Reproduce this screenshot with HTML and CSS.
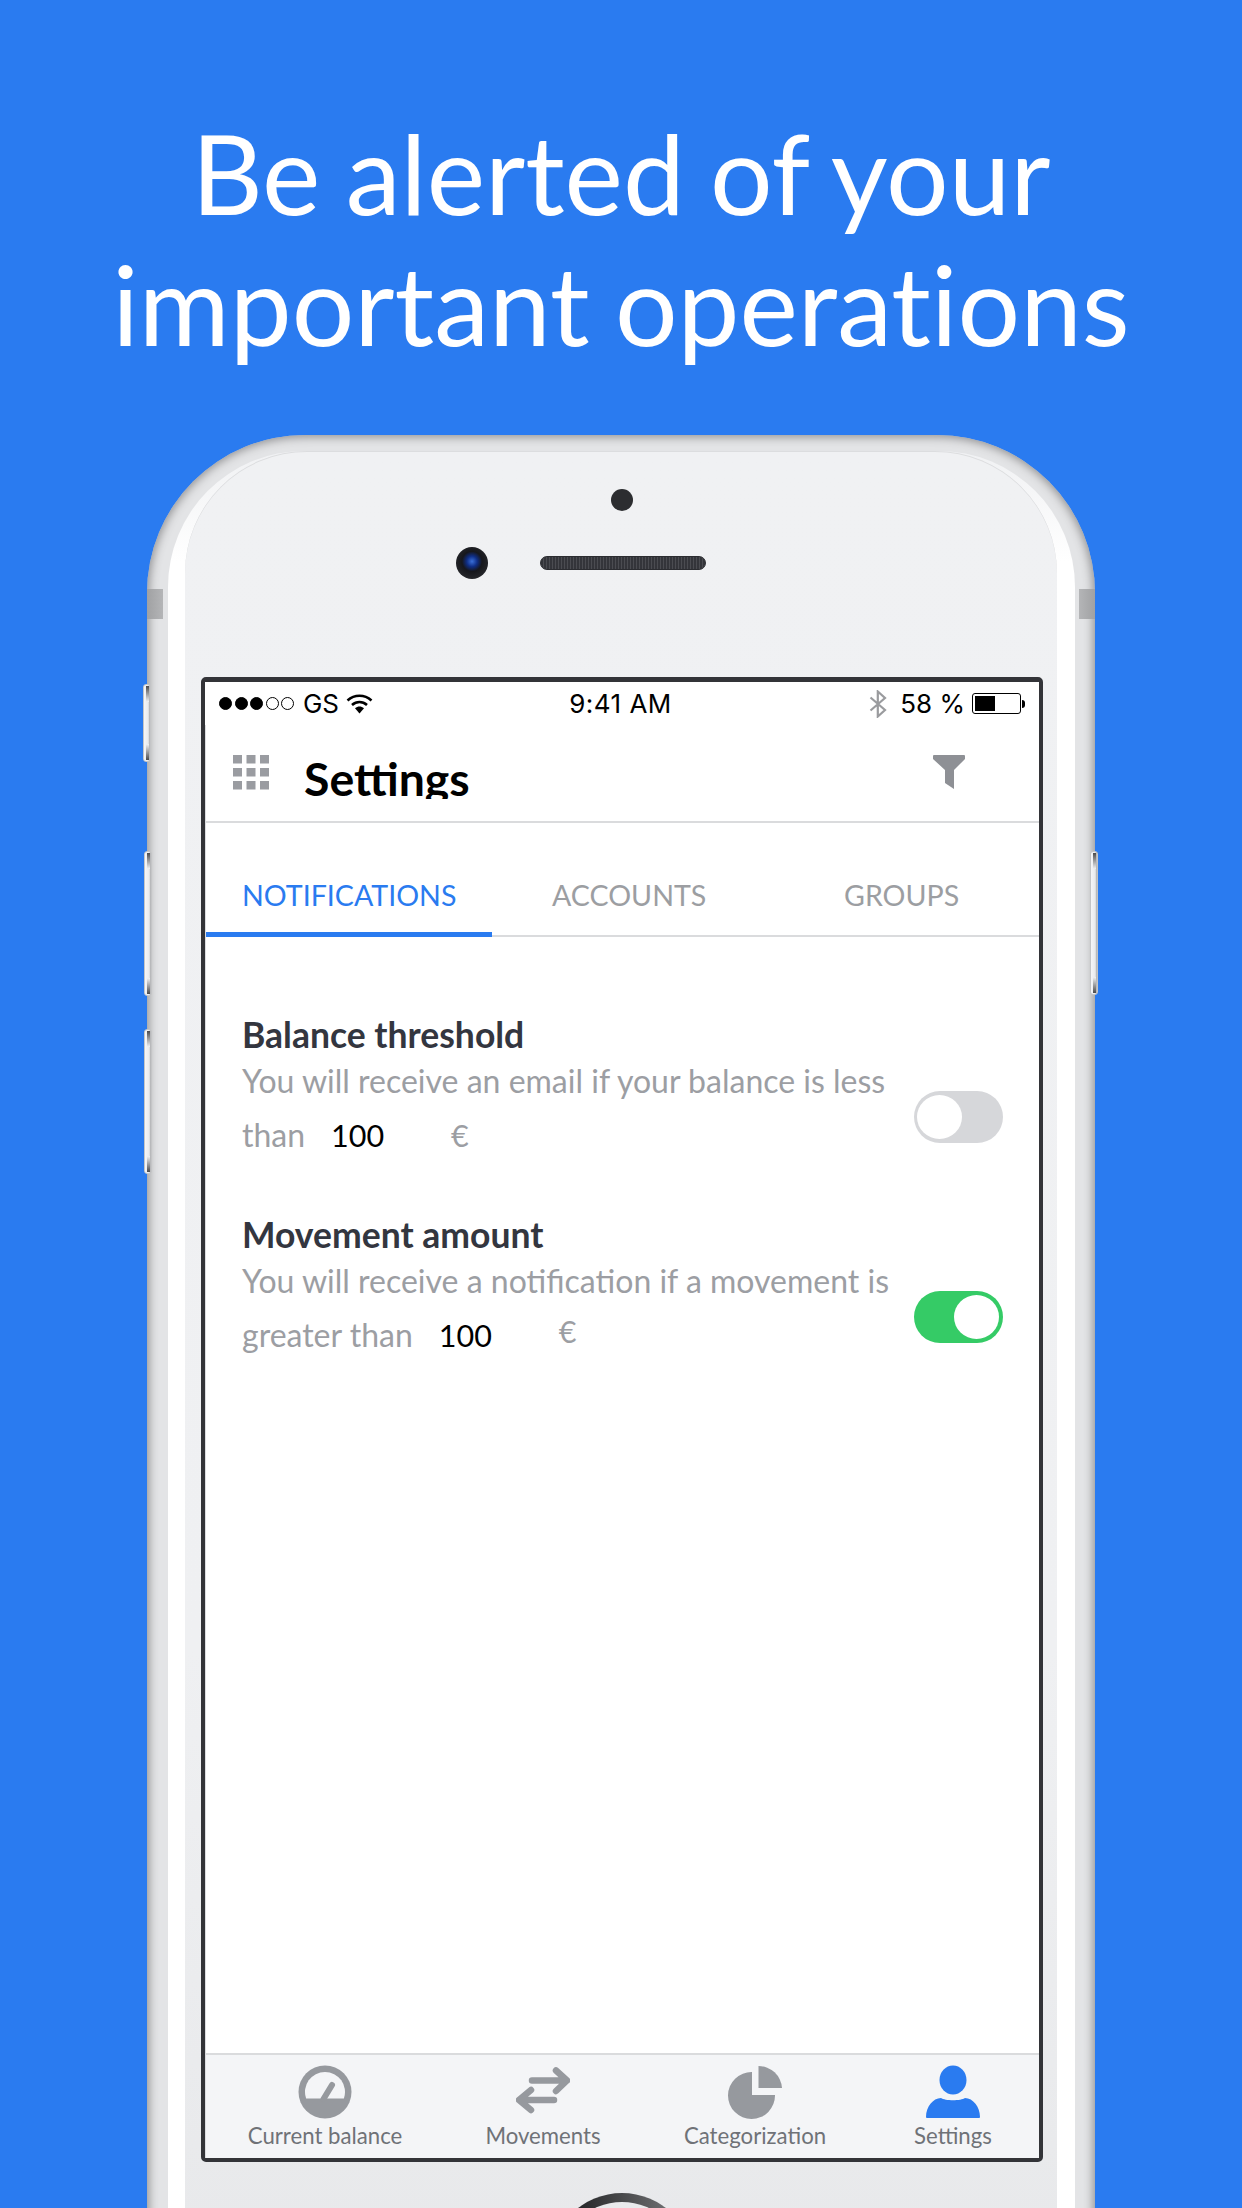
FILE: index.html
```html
<!DOCTYPE html>
<html lang="en">
<head>
<meta charset="utf-8">
<title>Settings</title>
<link rel="stylesheet" href="styles.css">
</head>
<body>
<main class="page">
  <h1 class="headline">Be alerted of your<br>important operations</h1>
  <section class="phone">
    <span class="hw mute"></span>
    <span class="hw vol-up"></span>
    <span class="hw vol-down"></span>
    <span class="hw power"></span>
    <span class="band band-left"></span>
    <span class="band band-right"></span>
    <div class="bezel">
      <div class="face">
        <div class="sensors">
          <span class="sensor-dot"></span>
          <div class="sensor-row">
            <span class="camera"></span>
            <span class="speaker"></span>
          </div>
        </div>
        <div class="screen">
          <div class="status">
            <div class="status-left">
              <span class="sig on"></span><span class="sig on"></span><span class="sig on"></span><span class="sig"></span><span class="sig"></span>
              <span class="carrier">GS</span>
              <svg class="wifi" width="27" height="20" viewBox="0 0 26 20"><path d="M1 6.500C8 .2 18 .2 25 6.500" fill="none" stroke="#000" stroke-width="2.600"/><path d="M5.500 11C10 7 16 7 20.500 11" fill="none" stroke="#000" stroke-width="2.600"/><path d="M8.500 14.200C11.500 11.800 14.500 11.800 17.500 14.200L13 19.500Z" fill="#000"/></svg>
            </div>
            <span class="clock">9:41 AM</span>
            <div class="status-right">
              <svg class="bt" width="18" height="28" viewBox="0 0 18 28"><path d="M1.500 7.500L16 20 8.800 26.500V1.500L16 8 1.500 20.500" fill="none" stroke="#9a9b9e" stroke-width="2.200"/></svg>
              <span class="pct">58 %</span>
              <span class="battery"><span class="battery-fill"></span></span>
              <span class="battery-nub"></span>
            </div>
          </div>
          <div class="app">
            <header class="app-head">
              <svg class="grid-icon" width="36" height="35" viewBox="0 0 36 35" fill="#9a9ca1"><rect x="0" y="0" width="9" height="8.500"/><rect x="13.500" y="0" width="9" height="8.500"/><rect x="27" y="0" width="9" height="8.500"/><rect x="0" y="13" width="9" height="8.500"/><rect x="13.500" y="13" width="9" height="8.500"/><rect x="27" y="13" width="9" height="8.500"/><rect x="0" y="26" width="9" height="8.500"/><rect x="13.500" y="26" width="9" height="8.500"/><rect x="27" y="26" width="9" height="8.500"/></svg>
              <div class="title-clip"><span class="title">Settings</span></div>
              <svg class="filter-icon" width="32" height="35" viewBox="0 0 32 35"><path d="M1 0H31Q32 0 32 1V4L21 15V34L12 28V15L0 4V1Q0 0 1 0Z" fill="#8e9095"/></svg>
            </header>
            <nav class="tabs">
              <div class="tab tab-active">NOTIFICATIONS</div>
              <div class="tab tab-mid">ACCOUNTS</div>
              <div class="tab tab-last">GROUPS</div>
            </nav>
            <div class="settings">
              <article class="row">
                <div class="row-text">
                  <h2 class="row-title">Balance threshold</h2>
                  <p class="row-desc">You will receive an email if your balance is less</p>
                  <p class="row-desc row-input"><span>than</span><span class="amount">100</span><span class="euro">€</span></p>
                </div>
                <span class="toggle"><span class="knob"></span></span>
              </article>
              <article class="row">
                <div class="row-text">
                  <h2 class="row-title">Movement amount</h2>
                  <p class="row-desc">You will receive a notification if a movement is</p>
                  <p class="row-desc row-input"><span>greater than</span><span class="amount">100</span><span class="euro euro-raised">€</span></p>
                </div>
                <span class="toggle toggle-on"><span class="knob"></span></span>
              </article>
            </div>
            <footer class="tabbar">
              <div class="bar-item item-1">
                <svg width="54" height="54" viewBox="0 0 54 54"><circle cx="27" cy="27" r="26.500" fill="#96999e"/><path d="M8.100 33.500A20 20 0 1 1 45.900 33.500Z" fill="#f4f5f7"/><path d="M25.500 34L34 20" stroke="#96999e" stroke-width="6" stroke-linecap="round" fill="none"/></svg>
                <span class="bar-label">Current balance</span>
              </div>
              <div class="bar-item item-2">
                <svg width="54" height="54" viewBox="0 0 54 54" fill="none" stroke="#96999e" stroke-width="6.500" stroke-linecap="round" stroke-linejoin="round"><path d="M16 15.500H51M40 5.500L51 15.500 40 26"/><path d="M38 35H3M15 25L3 35 15 45"/></svg>
                <span class="bar-label">Movements</span>
              </div>
              <div class="bar-item item-3">
                <svg width="54" height="54" viewBox="0 0 54 54" fill="#96999e"><path d="M24 7V30H47A23.500 23.500 0 1 1 24 7Z"/><path d="M30.500 1A23.500 23.500 0 0 1 54 23H30.500Z"/></svg>
                <span class="bar-label">Categorization</span>
              </div>
              <div class="bar-item item-4">
                <svg width="54" height="54" viewBox="0 0 54 54" fill="#2a7bf0"><ellipse cx="27" cy="15" rx="13.500" ry="14.500"/><path d="M0 52C0 42 7 33 15 33 19 36 35 36 39 33 47 33 54 42 54 52 54 53 53 53 52 53H2C1 53 0 53 0 52Z"/></svg>
                <span class="bar-label">Settings</span>
              </div>
            </footer>
          </div>
        </div>
        <div class="chin"><span class="home"><span class="home-inner"></span></span></div>
      </div>
    </div>
  </section>
</main>
</body>
</html>
```
FILE: styles.css
```css
* { box-sizing: border-box; }
html, body { margin: 0; padding: 0; }
body { background: #2a7bf0; font-family: "Lato", "Liberation Sans", sans-serif; }
.page { width: 1242px; height: 2208px; overflow: hidden; background: #2a7bf0; }
.headline { margin: 0; padding-top: 107px; height: 435px; text-align: center; color: #fff; font-weight: 400; font-size: 110.500px; word-spacing: -3px; line-height: 131px; font-variant-ligatures: none; }
.phone { position: relative; width: 948px; height: 1790px; margin-left: 147px; padding: 16px 20px 0 21px; border-radius: 158px 158px 0 0; background: #e3e4e6; box-shadow: inset 0 0 10px 2px #909092; }
.hw { position: absolute; width: 8px; border-radius: 3px; border: 1px solid #c4c5c7;
  background: linear-gradient(#4a4a4c, #f1f2f4) center 1px / 3px 16px no-repeat, linear-gradient(#f1f2f4, #4a4a4c) center calc(100% - 1px) / 3px 16px no-repeat, linear-gradient(90deg, #f6f6f8, #e9eaec 70%, #a5a6a8); }
.mute { left: -4px; top: 249px; height: 78px; }
.vol-up { left: -3px; top: 416px; height: 145px; }
.vol-down { left: -3px; top: 594px; height: 145px; }
.power { right: -3px; top: 416px; height: 144px; }
.band { position: absolute; top: 154px; width: 16px; height: 30px; background: linear-gradient(90deg, #a0a1a3, #b4b5b7); }
.band-left { left: 0; }
.band-right { right: 0; transform: scaleX(-1); }
.bezel { height: 100%; padding: 0 18px 0 17px; border-radius: 136px 136px 0 0; background: linear-gradient(#f0f1f3 0, #ffffff 110px); }
.face { height: 100%; padding: 0 14px 0 16px; border-radius: 122px 122px 0 0; background: linear-gradient(#f0f1f3 0, #eff0f2 1200px, #e8e9eb 100%); box-shadow: inset 0 1px 0 #dcdddf; }
.sensors { height: 226px; padding-top: 38px; display: flex; flex-direction: column; align-items: center; }
.sensor-dot { width: 22px; height: 22px; border-radius: 50%; background: #2c2d30; }
.sensor-row { display: flex; align-items: center; gap: 52px; margin-top: 36px; padding-right: 82px; }
.camera { width: 32px; height: 32px; border-radius: 50%; background: radial-gradient(circle at 50% 45%, #3a6fd8 0, #0f2e86 22%, #16171c 42%, #26272b 75%, #55565a 100%); }
.speaker { width: 166px; height: 14px; border-radius: 7px; background: repeating-linear-gradient(90deg, #34353a 0 2px, #4b4c51 2px 3px); border: 1px solid #2b2c30; }
.screen { display: flex; flex-direction: column; width: 842px; height: 1485px; border: 4px solid #333438; border-top-width: 5px; border-radius: 5px; background: #fff; }
.status { flex: none; height: 43px; display: grid; grid-template-columns: 1fr auto 1fr; align-items: center; padding: 0 14px 0 14px; font-family: "Inter", "Liberation Sans", sans-serif; font-size: 26px; color: #000; }
.status-left { display: flex; align-items: center; }
.sig { width: 13px; height: 13px; margin-right: 2.600px; border-radius: 50%; border: 1px solid #000; }
.sig.on { background: #000; }
.carrier { margin-left: 6px; }
.wifi { margin-left: 7px; }
.clock { text-align: center; letter-spacing: .5px; margin-right: 3px; }
.status-right { display: flex; align-items: center; justify-content: flex-end; }
.pct { margin-left: 13px; margin-right: 7px; }
.battery { display: block; width: 49px; height: 21px; padding: 2px; border: 1px solid #000; border-radius: 3px; }
.battery-fill { display: block; width: 20px; height: 100%; background: #000; }
.battery-nub { width: 3px; height: 8px; margin-left: 1px; background: #000; border-radius: 0 3px 3px 0; }
.app { flex: 1; min-height: 0; display: flex; flex-direction: column; border-left: 1px solid #dcdde0; }
.app-head { flex: none; display: flex; align-items: flex-start; height: 98px; padding: 30px 74px 0 27px; border-bottom: 2px solid #dadbdd; }
.title-clip { flex: 1; height: 44px; margin-left: 35px; overflow: hidden; }
.title { display: block; margin-top: -3px; font-size: 46.400px; font-weight: 700; line-height: 52px; color: #000; font-feature-settings: "liga", "dlig"; }
.tabs { flex: none; display: flex; height: 114px; border-bottom: 2px solid #dadbdd; font-size: 28.600px; line-height: 36px; color: #9c9ea2; }
.tab { padding-top: 54px; }
.tab-active { width: 286px; padding-left: 36px; color: #2a7bf0; border-bottom: 5px solid #2a7bf0; height: 114px; }
.tab-mid { width: 294px; padding-left: 60px; }
.tab-last { padding-left: 58px; }
.settings { flex: 1; padding: 78px 36px 0 36px; display: flex; flex-direction: column; gap: 52px; }
.row { display: flex; align-items: center; justify-content: space-between; }
.row-title { margin: 0; font-size: 35.500px; line-height: 40px; font-weight: 700; color: #33363f; }
.row-desc { margin: 0; font-size: 32px; line-height: 52px; color: #9c9ea3; white-space: nowrap; font-feature-settings: "liga", "dlig"; }
.row-input { display: flex; line-height: 56px; }
.amount { width: 120px; margin-left: 26px; font-size: 30.500px; color: #000; }
.euro { color: #9c9ea3; font-size: 30.500px; }
.euro-raised { margin-top: -4px; }
.toggle { flex: none; width: 89px; height: 52px; margin-top: 55px; padding: 4px 3px; border-radius: 26px; background: #d6d7da; }
.knob { display: block; width: 45px; height: 44px; border-radius: 50%; background: #fff; }
.toggle-on { background: #35cb66; padding-left: 40px; }
.tabbar { flex: none; position: relative; height: 105px; display: flex; background: #f4f5f7; border-top: 2px solid #dadbdd; }
.bar-item { display: flex; flex-direction: column; align-items: center; padding-top: 10px; }
.item-1 { width: 238px; }
.item-2 { width: 198px; }
.item-3 { width: 226px; }
.item-4 { width: 170px; }
.bar-label { font-size: 22.200px; line-height: 28px; margin-top: 3px; color: #6f7277; font-feature-settings: "liga", "dlig"; }
.chin { display: flex; justify-content: center; padding-top: 31px; }
.home { flex: none; width: 144px; height: 144px; padding: 9px; border-radius: 50%; background: linear-gradient(90deg, #262729 20%, #6b6c6e 80%); }
.home-inner { display: block; width: 100%; height: 100%; border-radius: 50%; background: #e9eaec; }
```
